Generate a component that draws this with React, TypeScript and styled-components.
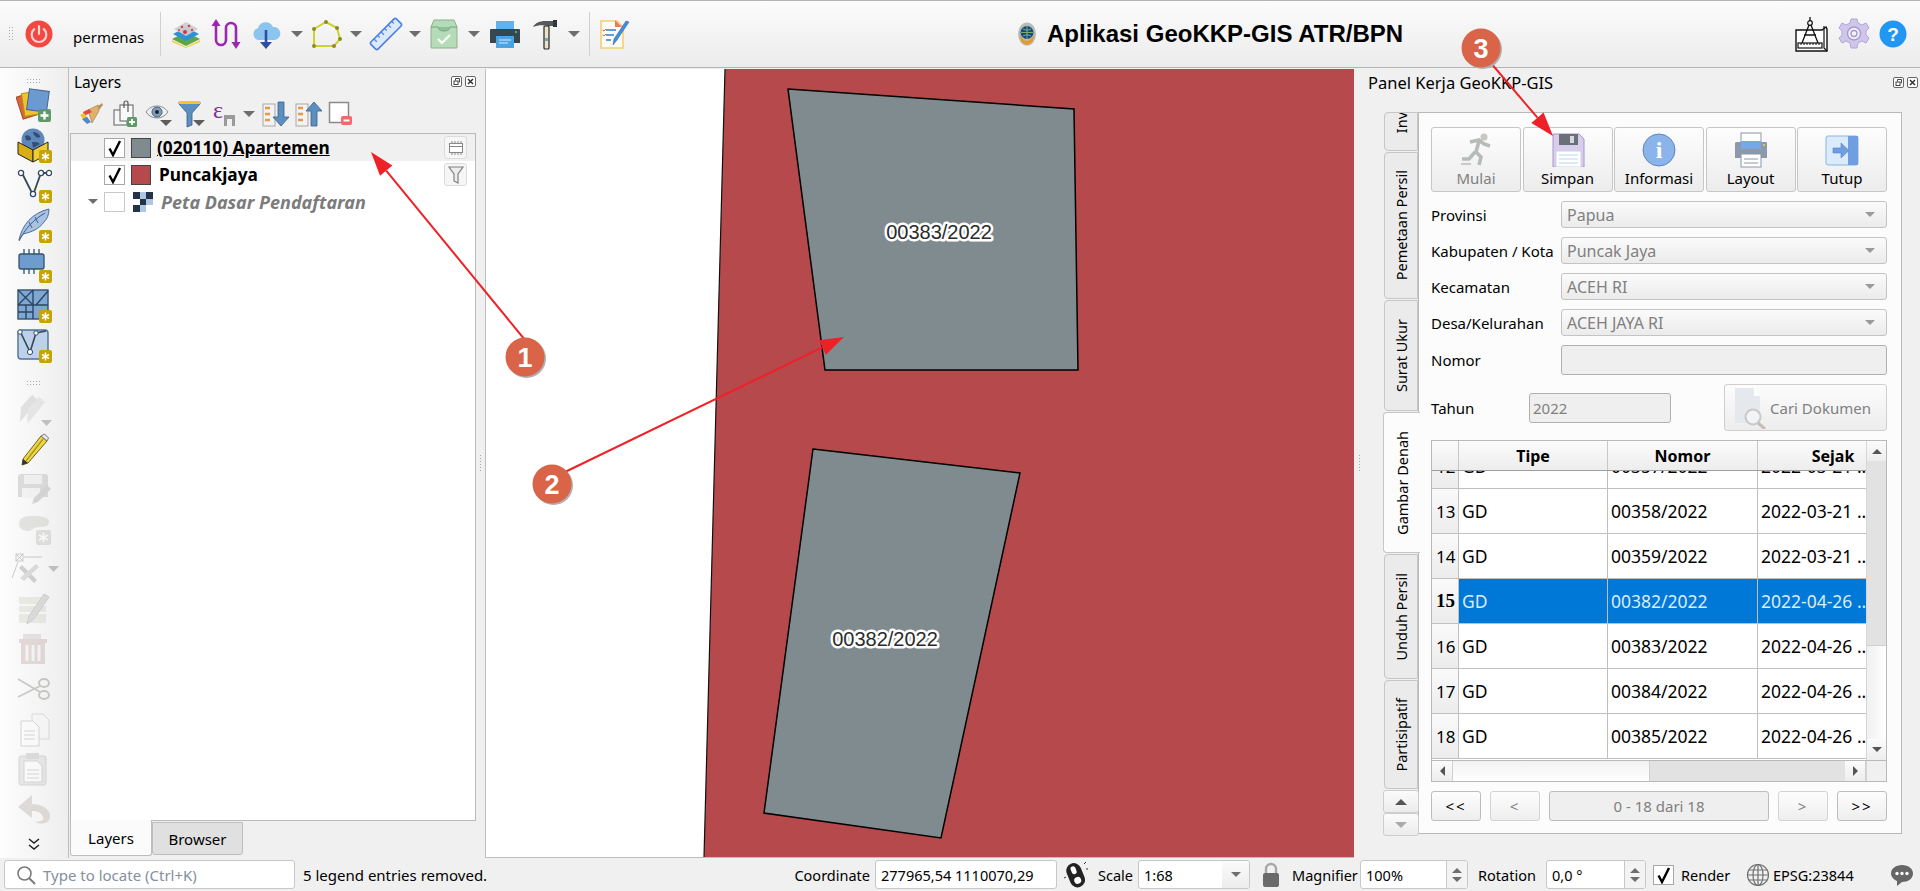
import React from "react";
import styled, { createGlobalStyle } from "styled-components";

const Global = createGlobalStyle`
  html, body { margin: 0; padding: 0; overflow: hidden; background: #f0f0f0; }
  #root { width: 1920px; height: 891px; }
  * { box-sizing: border-box; }
`;

const Page = styled.div`
  position: relative;
  width: 1920px;
  height: 891px;
  display: flex;
  flex-direction: column;
  background: #f0f0f0;
  color: #000;
  font-family: "Noto Sans", "Open Sans", sans-serif;
  font-size: 15px;
  overflow: hidden;
`;

/* ---------- generic drawing helpers ---------- */
const IconSvg = styled.svg`
  display: block;
  flex: none;
`;
const Ico: React.FC<{ w?: number; h?: number; children: React.ReactNode }> = ({ w = 32, h = 32, children }) => (
  <IconSvg width={w} height={h} viewBox={`0 0 ${w} ${h}`}>
    {children}
  </IconSvg>
);
const Badge = ({ x, y, off }: { x: number; y: number; off?: boolean }) => (
  <g transform={`translate(${x} ${y})`}>
    <rect width="13" height="13" rx="2" fill={off ? "#c9c9c2" : "#c9a300"} />
    <path d="M6.5 2.5v8M3 4.5l7 4M10 4.5l-7 4" stroke="#fff" strokeWidth="1.5" />
  </g>
);
const Caret = styled.span<{ $dir?: "up" | "down" | "left" | "right"; $size?: number; $color?: string }>`
  display: block;
  flex: none;
  width: 0;
  height: 0;
  ${({ $dir = "down", $size = 5, $color = "#6e6e6e" }) => {
    const s = `${$size}px solid transparent`;
    const c = `${$size}px solid ${$color}`;
    if ($dir === "down") return `border-left:${s};border-right:${s};border-top:${c};`;
    if ($dir === "up") return `border-left:${s};border-right:${s};border-bottom:${c};`;
    if ($dir === "left") return `border-top:${s};border-bottom:${s};border-right:${c};`;
    return `border-top:${s};border-bottom:${s};border-left:${c};`;
  }}
`;
const Dots = styled.div<{ $w: number; $h: number }>`
  flex: none;
  width: ${(p) => p.$w}px;
  height: ${(p) => p.$h}px;
  background-image: radial-gradient(circle, #a8a8a8 0.7px, transparent 0.8px);
  background-size: 3px 3px;
`;

/* ---------- top toolbar ---------- */
const TopBar = styled.header`
  flex: none;
  height: 68px;
  display: flex;
  align-items: center;
  padding-left: 8px;
  background: linear-gradient(#fbfbfb, #ececec);
  border-top: 1px solid #b4b4b4;
  border-bottom: 1px solid #b4b4b4;
`;
const ToolSlot = styled.div<{ $w: number }>`
  flex: none;
  width: ${(p) => p.$w}px;
  height: 40px;
  display: flex;
  align-items: center;
  justify-content: center;
`;
const UserName = styled.span`
  flex: none;
  width: 96px;
  padding-left: 9px;
  font-size: 15px;
  margin-top: 5px;
`;
const ToolSep = styled.div<{ $ml: number }>`
  flex: none;
  width: 1px;
  height: 44px;
  margin-left: ${(p) => p.$ml}px;
  background: #d0d0d0;
`;
const AppTitle = styled.div`
  flex: none;
  margin-left: 381px;
  width: 400px;
  display: flex;
  align-items: center;
  gap: 11px;
  font-family: "Liberation Sans", Arial, sans-serif;
  font-weight: 700;
  font-size: 24px;
  white-space: nowrap;
`;
const TopRight = styled.div`
  margin-left: auto;
  display: flex;
  align-items: center;
  gap: 9px;
  padding-right: 13px;
`;

/* ---------- main ---------- */
const Main = styled.main`
  flex: 1;
  min-height: 0;
  display: flex;
`;
const SideBar = styled.aside`
  flex: none;
  width: 69px;
  border-right: 1px solid #bdbdbd;
  display: flex;
  flex-direction: column;
  align-items: center;
  padding-top: 10px;
  background: linear-gradient(90deg, #fdfdfd, #eeeeee);
`;
const SideSlot = styled.div<{ $h?: number; $fade?: boolean }>`
  flex: none;
  width: 100%;
  height: ${(p) => p.$h ?? 40}px;
  display: flex;
  align-items: center;
  justify-content: center;
  opacity: ${(p) => (p.$fade ? 0.36 : 1)};
`;
const SideHandle = styled.div`
  flex: none;
  width: 100%;
  height: 25px;
  padding-bottom: 4px;
  display: flex;
  align-items: flex-end;
  justify-content: center;
`;
const Splitter = styled.div<{ $w: number }>`
  flex: none;
  width: ${(p) => p.$w}px;
  display: flex;
  align-items: center;
  justify-content: center;
`;
const Dock = styled.section`
  flex: none;
  width: 407px;
  padding-left: 1px;
  display: flex;
  flex-direction: column;
`;
const DockTitle = styled.div`
  flex: none;
  height: 26px;
  display: flex;
  align-items: center;
  padding: 1px 0 0 4px;
  font-size: 15.5px;
`;
const FloatButtons = styled.div`
  margin-left: auto;
  display: flex;
  gap: 3px;
`;
const DockTools = styled.div`
  flex: none;
  height: 39px;
  display: flex;
  align-items: center;
  padding-left: 8px;
`;
const DockTool = styled.div<{ $w: number }>`
  flex: none;
  width: ${(p) => p.$w}px;
  display: flex;
  justify-content: center;
  align-items: center;
`;
const Tree = styled.div`
  flex: 1;
  background: #fff;
  border: 1px solid #b9b9b9;
  min-height: 0;
`;
const TreeRow = styled.div<{ $active?: boolean }>`
  height: 27px;
  display: flex;
  align-items: center;
  padding-left: 11px;
  background: ${(p) => (p.$active ? "#f0f0f0" : "transparent")};
`;
const Expander = styled.div`
  flex: none;
  width: 22px;
  display: flex;
  justify-content: center;
`;
const CheckBox = styled.div<{ $dim?: boolean }>`
  flex: none;
  width: 21px;
  height: 20px;
  border: 1px solid ${(p) => (p.$dim ? "#c8c8c8" : "#a8a8a8")};
  background: #fff;
  display: flex;
  align-items: center;
  justify-content: center;
`;
const Swatch = styled.div<{ $c: string }>`
  flex: none;
  width: 20px;
  height: 20px;
  margin-left: 6px;
  background: ${(p) => p.$c};
  border: 1px solid #444;
`;
const RasterSlot = styled.div`
  flex: none;
  width: 20px;
  height: 20px;
  margin-left: 8px;
`;
const LayerName = styled.span<{ $u?: boolean; $ghost?: boolean; $ml: number }>`
  margin-left: ${(p) => p.$ml}px;
  font-weight: 700;
  font-size: ${(p) => (p.$ghost ? 18 : 17.3)}px;
  white-space: nowrap;
  text-decoration: ${(p) => (p.$u ? "underline" : "none")};
  font-style: ${(p) => (p.$ghost ? "italic" : "normal")};
  color: ${(p) => (p.$ghost ? "#7b7b7b" : "#000")};
`;
const Indicator = styled.div`
  flex: none;
  width: 23px;
  height: 23px;
  margin: 0 8px 0 auto;
  border: 1px solid #dcdcdc;
  border-radius: 3px;
  background: #f6f6f6;
  display: flex;
  align-items: center;
  justify-content: center;
`;
const DockTabs = styled.div`
  flex: none;
  height: 37px;
  display: flex;
  align-items: flex-start;
`;
const DockTab = styled.div<{ $active?: boolean }>`
  flex: none;
  width: ${(p) => (p.$active ? 82 : 91)}px;
  height: ${(p) => (p.$active ? 36 : 33)}px;
  margin-top: ${(p) => (p.$active ? -1 : 1)}px;
  background: ${(p) => (p.$active ? "#fbfbfb" : "#e0e0e0")};
  border: 1px solid #bdbdbd;
  border-top: ${(p) => (p.$active ? "0" : "1px solid #bdbdbd")};
  border-radius: 0 0 3px 3px;
  display: flex;
  align-items: center;
  justify-content: center;
  font-size: 15px;
`;
const MapFrame = styled.div`
  flex: none;
  width: 869px;
  height: 789px;
  margin-top: 1px;
  border-left: 1px solid #bdbdbd;
  border-bottom: 1px solid #bdbdbd;
  background: #fff;
`;
const MapSvg = styled.svg`
  display: block;
`;
const MapLabel = styled.text`
  font-family: "Liberation Sans", Arial, sans-serif;
  font-size: 20px;
  fill: #2b2b2b;
  stroke: #fff;
  stroke-width: 5px;
  paint-order: stroke;
  stroke-linejoin: round;
  text-anchor: middle;
  dominant-baseline: central;
`;

/* ---------- work panel ---------- */
const Panel = styled.section`
  flex: 1;
  min-width: 0;
  display: flex;
  flex-direction: column;
`;
const PanelTitle = styled.div`
  flex: none;
  height: 26px;
  margin-top: 1px;
  display: flex;
  align-items: center;
  padding: 0 2px 0 4px;
  font-size: 16.5px;
`;
const PanelBody = styled.div`
  flex: none;
  margin: 17px 0 0 19px;
  display: flex;
`;
const TabColumn = styled.div`
  flex: none;
  width: 35px;
  display: flex;
  flex-direction: column;
  align-items: flex-end;
  position: relative;
  z-index: 1;
`;
const SideTab = styled.div<{ $h: number; $active?: boolean; $end?: boolean }>`
  flex: none;
  height: ${(p) => p.$h}px;
  width: ${(p) => (p.$active ? 37 : 34)}px;
  margin-right: ${(p) => (p.$active ? -2 : 0)}px;
  margin-bottom: 1px;
  overflow: hidden;
  border: 1px solid #c6c6c6;
  border-right: ${(p) => (p.$active ? "0" : "1px solid #c6c6c6")};
  border-radius: 4px 0 0 4px;
  background: ${(p) => (p.$active ? "#fcfcfc" : "#ebebeb")};
  display: flex;
  align-items: center;
  justify-content: ${(p) => (p.$end ? "flex-end" : "center")};
  flex-direction: column;
  padding-bottom: ${(p) => (p.$end ? 17 : 0)}px;
`;
const SideTabText = styled.span`
  writing-mode: vertical-rl;
  transform: rotate(180deg);
  white-space: nowrap;
  font-size: 14.5px;
  line-height: 1;
`;
const TabStep = styled.div`
  flex: none;
  width: 36px;
  height: 23px;
  margin-right: -1px;
  border: 1px solid #cdcdcd;
  border-radius: 3px;
  background: linear-gradient(#fbfbfb, #ececec);
  display: flex;
  align-items: center;
  justify-content: center;
`;
const Pane = styled.div`
  flex: none;
  width: 484px;
  height: 722px;
  padding: 14px 14px 0 12px;
  background: #fcfcfc;
  border: 1px solid #b9b9b9;
  display: flex;
  flex-direction: column;
`;
const ActionRow = styled.div`
  flex: none;
  display: grid;
  grid-template-columns: 90px 90px 90px 90px 90px;
  column-gap: 1.5px;
  height: 65px;
`;
const ActionBtn = styled.div<{ $off?: boolean }>`
  border: 1px solid #c6c6c6;
  border-radius: 3px;
  background: linear-gradient(#fdfdfd, #ececec);
  display: flex;
  flex-direction: column;
  align-items: center;
  padding-top: 3px;
  color: ${(p) => (p.$off ? "#808080" : "#000")};
  font-size: 15px;
  line-height: 20px;
`;
const ActionIcon = styled.div`
  height: 37px;
  display: flex;
  align-items: center;
  justify-content: center;
`;
const FormGrid = styled.div`
  flex: none;
  margin-top: 9px;
  display: grid;
  grid-template-columns: 130px 326px;
  row-gap: 9px;
  align-items: center;
`;
const FieldLabel = styled.span`
  font-size: 15px;
  white-space: nowrap;
`;
const Combo = styled.div`
  height: 27px;
  display: flex;
  align-items: center;
  justify-content: space-between;
  padding: 0 11px 0 5px;
  border: 1px solid #c4c4c4;
  border-radius: 3px;
  background: linear-gradient(#fbfbfb, #ebebeb);
  color: #808080;
  font-size: 16px;
`;
const EmptyField = styled.div`
  height: 30px;
  border: 1px solid #b0b0b0;
  border-radius: 3px;
  background: #efefef;
`;
const YearRow = styled.div`
  flex: none;
  margin-top: 9px;
  height: 47px;
  display: flex;
  align-items: center;
`;
const YearLabel = styled(FieldLabel)`
  flex: none;
  width: 98px;
`;
const YearField = styled.div`
  flex: none;
  width: 142px;
  height: 30px;
  padding: 0 3px;
  display: flex;
  align-items: center;
  border: 1px solid #b0b0b0;
  border-radius: 3px;
  background: #efefef;
  color: #808080;
`;
const FindBtn = styled.div`
  flex: none;
  margin-left: auto;
  width: 163px;
  height: 47px;
  display: flex;
  align-items: center;
  padding-left: 7px;
  border: 1px solid #cfcfcf;
  border-radius: 3px;
  background: linear-gradient(#fcfcfc, #ededed);
  color: #808080;
  font-size: 15px;
  white-space: nowrap;
`;
const TableFrame = styled.div`
  flex: none;
  margin-top: 9px;
  height: 342px;
  display: grid;
  grid-template-columns: 434px 20px;
  grid-template-rows: 319px 21px;
  border: 1px solid #b9b9b9;
  background: #fff;
`;
const TableView = styled.div`
  min-width: 0;
  overflow: hidden;
  display: flex;
  flex-direction: column;
`;
const cols = "27px 149px 150px 151px";
const HeadRow = styled.div`
  flex: none;
  position: relative;
  z-index: 1;
  height: 30px;
  display: grid;
  grid-template-columns: ${cols};
  background: linear-gradient(#fbfbfb, #ededed);
  border-bottom: 1px solid #9f9f9f;
`;
const HeadCell = styled.div`
  display: flex;
  align-items: center;
  justify-content: center;
  border-right: 1px solid #c8c8c8;
  font-weight: 700;
  font-size: 16px;
`;
const BodyClip = styled.div`
  flex: 1;
  min-height: 0;
  overflow: hidden;
`;
const RowsScroll = styled.div`
  margin-top: -27px;
`;
const DataRow = styled.div`
  height: 45px;
  display: grid;
  grid-template-columns: ${cols};
`;
const RowHead = styled.div<{ $sel?: boolean }>`
  display: flex;
  align-items: center;
  padding-left: 4px;
  background: linear-gradient(#fafafa, #ececec);
  border-right: 1px solid #c0c0c0;
  border-bottom: 1px solid #c0c0c0;
  font-size: ${(p) => (p.$sel ? 19 : 17)}px;
  font-family: ${(p) => (p.$sel ? '"Liberation Serif", serif' : "inherit")};
  font-weight: ${(p) => (p.$sel ? 700 : 400)};
`;
const Cell = styled.div<{ $sel?: boolean }>`
  display: flex;
  align-items: center;
  padding-left: 3px;
  white-space: nowrap;
  overflow: hidden;
  font-size: 17.5px;
  background: ${(p) => (p.$sel ? "#0078d7" : "#fff")};
  color: ${(p) => (p.$sel ? "#dcecf9" : "#000")};
  border-right: 1px solid #c0c0c0;
  border-bottom: 1px solid #c0c0c0;
`;
const VScroll = styled.div`
  display: flex;
  flex-direction: column;
  background: linear-gradient(90deg, #f0f0f0, #ffffff);
  border-left: 1px solid #d6d6d6;
`;
const VStep = styled.div<{ $h: number }>`
  flex: none;
  height: ${(p) => p.$h}px;
  background: linear-gradient(#fbfbfb, #ededed);
  display: flex;
  align-items: center;
  justify-content: center;
`;
const VThumb = styled.div`
  flex: none;
  height: 185px;
  background: #e2e2e2;
  border-bottom: 1px solid #d0d0d0;
`;
const VTrack = styled.div`
  flex: 1;
`;
const HScroll = styled.div`
  display: grid;
  grid-template-columns: 21px 196px 196px 21px;
  background: linear-gradient(#f2f2f2, #ffffff);
  border-top: 1px solid #b9b9b9;
`;
const HStep = styled.div`
  display: flex;
  align-items: center;
  justify-content: center;
  background: linear-gradient(#fbfbfb, #ededed);
  border-right: 1px solid #d0d0d0;
`;
const HThumb = styled.div`
  background: #e2e2e2;
  border-left: 1px solid #cfcfcf;
`;
const HTrack = styled.div``;
const Corner = styled.div`
  background: #f0f0f0;
  border-top: 1px solid #b9b9b9;
  border-left: 1px solid #d6d6d6;
`;
const Pager = styled.div`
  flex: none;
  margin-top: 9px;
  height: 30px;
  display: grid;
  grid-template-columns: 50px 50px 220px 50px 50px;
  column-gap: 9px;
`;
const PageBtn = styled.div<{ $off?: boolean; $flat?: boolean }>`
  display: flex;
  align-items: center;
  justify-content: center;
  border: 1px solid ${(p) => (p.$off && !p.$flat ? "#d4d4d4" : "#bdbdbd")};
  border-radius: 3px;
  background: ${(p) => (p.$flat ? "#efefef" : "linear-gradient(#fdfdfd, #eeeeee)")};
  color: ${(p) => (p.$off ? "#808080" : "#000")};
  font-size: 15px;
  letter-spacing: ${(p) => (p.$flat ? 0 : 2)}px;
`;

/* ---------- status bar ---------- */
const StatusBar = styled.footer`
  flex: none;
  height: 33px;
  display: flex;
  align-items: center;
  padding-left: 4px;
  font-size: 14.5px;
  white-space: nowrap;
`;
const Locator = styled.div`
  flex: none;
  width: 291px;
  height: 29px;
  display: flex;
  align-items: center;
  gap: 7px;
  padding-left: 11px;
  background: #fff;
  border: 1px solid #c8c8c8;
  border-radius: 3px;
  color: #84909c;
  font-size: 15px;
`;
const StatusMsg = styled.span`
  flex: none;
  width: 499px;
  padding-left: 8px;
  font-size: 15px;
`;
const StatusLabel = styled.span<{ $w: number; $right?: boolean; $pad?: number }>`
  flex: none;
  width: ${(p) => p.$w}px;
  text-align: ${(p) => (p.$right ? "right" : "left")};
  ${(p) => (p.$right ? `padding-right:${p.$pad ?? 5}px;` : `padding-left:${p.$pad ?? 0}px;`)}
`;
const StatusField = styled.div<{ $w: number }>`
  flex: none;
  width: ${(p) => p.$w}px;
  height: 29px;
  display: flex;
  align-items: center;
  justify-content: space-between;
  background: #fff;
  border: 1px solid #c8c8c8;
  border-radius: 3px;
  padding-left: 5px;
  overflow: hidden;
`;
const SpinCol = styled.div`
  flex: none;
  align-self: stretch;
  width: 21px;
  display: flex;
  flex-direction: column;
  align-items: center;
  justify-content: center;
  gap: 4px;
  background: #f3f3f3;
  border-left: 1px solid #c8c8c8;
`;
const ComboDrop = styled(SpinCol)`
  width: 27px;
  background: linear-gradient(#fbfbfb, #ececec);
  border-left: 0;
`;
const StatusSlot = styled.div<{ $w: number; $ml?: number }>`
  flex: none;
  width: ${(p) => p.$w}px;
  margin-left: ${(p) => p.$ml ?? 0}px;
  display: flex;
  justify-content: center;
  align-items: center;
`;
const StatusCheck = styled(CheckBox)`
  margin-left: 7px;
`;

/* ---------- annotation overlay ---------- */
const Overlay = styled.svg`
  position: absolute;
  left: 0;
  top: 0;
  pointer-events: none;
  z-index: 5;
`;
const CalloutNum = styled.text`
  font-family: "Liberation Sans", Arial, sans-serif;
  font-weight: 700;
  font-size: 27px;
  fill: #fff;
  text-anchor: middle;
  dominant-baseline: central;
`;

/* ---------- toolbar icons ---------- */
const PowerIcon = () => (
  <Ico w={30} h={30}>
    <circle cx="15" cy="15" r="13.5" fill="#f3473f" />
    <path d="M10.2 10.2a7.3 7.3 0 1 0 9.6 0" fill="none" stroke="#fcd6d3" strokeWidth="2.2" strokeLinecap="round" />
    <path d="M15 7v8" stroke="#fcd6d3" strokeWidth="2.2" strokeLinecap="round" />
  </Ico>
);
const MapLayersIcon = () => (
  <Ico>
    <path d="M2 21l14-7 14 7-14 7z" fill="#5aa64a" />
    <path d="M2 22l14 7 14-7v2l-14 6-14-6z" fill="#f0cf3c" />
    <path d="M3 16l13-7 13 7-13 7z" fill="#2f8fd8" />
    <path d="M4 11l12-7 12 7-12 7z" fill="#c9ced3" opacity=".95" />
    <circle cx="12" cy="9" r="1.3" fill="#e0453a" />
    <circle cx="19" cy="8" r="1.3" fill="#e0453a" />
    <circle cx="15" cy="14" r="2" fill="#d5343a" />
    <circle cx="22" cy="12" r="1.2" fill="#e0453a" />
    <circle cx="9" cy="12" r="1.1" fill="#e0453a" />
  </Ico>
);
const WaveIcon = () => (
  <Ico w={30} h={32}>
    <path d="M5 7v15a5 5 0 0 0 10 0V10a5 5 0 0 1 10 0v16" fill="none" stroke="#9c27b0" strokeWidth="2.6" />
    <path d="M5 1l-4.500 7h9z" fill="#9c27b0" />
    <path d="M25 31l-4.500-7h9z" fill="#9c27b0" />
  </Ico>
);
const CloudIcon = () => (
  <Ico>
    <path d="M8 22a6 6 0 0 1-1-11.8A8 8 0 0 1 22 9a6.5 6.5 0 0 1 1.5 13z" fill="#8cc4f0" />
    <path d="M15 12v14" stroke="#2c4fa6" strokeWidth="2.6" />
    <path d="M15 31l-6-7h12z" fill="#2c4fa6" />
  </Ico>
);
const PolygonIcon = () => (
  <Ico>
    <path d="M4 28V11l12-7 11 6 3 11-6 7z" fill="none" stroke="#cdd32e" strokeWidth="2" />
    {[[4, 28], [4, 11], [16, 4], [27, 10], [30, 21], [24, 28]].map(([x, y]) => (
      <circle key={`${x}-${y}`} cx={x} cy={y} r="2" fill="#8f8a26" />
    ))}
  </Ico>
);
const RulerIcon = () => (
  <Ico w={34} h={34}>
    <g transform="rotate(-45 17 17)">
      <rect x="-1" y="12" width="36" height="10" rx="2" fill="#dce8fc" stroke="#4b7ee8" strokeWidth="1.6" />
      <path d="M5 12v4M10 12v3M15 12v4M20 12v3M25 12v4M30 12v3" stroke="#4b7ee8" strokeWidth="1.2" />
    </g>
  </Ico>
);
const TrayIcon = () => (
  <Ico>
    <path d="M2 9l3-7h20l3 7v21H2z" fill="#b3dcb7" stroke="#8fae92" />
    <path d="M2 9h7c1 3 2 4 6 4s5-1 6-4h7" fill="#8fc096" stroke="#7da282" />
    <path d="M9 21l4 4 8-8" fill="none" stroke="#fff" strokeWidth="2.2" />
  </Ico>
);
const PrinterIcon = () => (
  <Ico>
    <rect x="8" y="3" width="18" height="9" fill="#5db4ee" />
    <path d="M3 11h28a1 1 0 0 1 1 1v13H2V12a1 1 0 0 1 1-1z" fill="#37474f" />
    <rect x="8" y="18" width="18" height="12" fill="#4aa3e4" />
    <path d="M11 22h12M11 25h9" stroke="#d7ecfb" strokeWidth="1.2" />
    <circle cx="28" cy="14" r="1" fill="#5fd07a" />
  </Ico>
);
const HammerIcon = () => (
  <Ico>
    <path d="M3 9c2-4 7-6 12-6h11v5H18c-5-1-10-1-15 1z" fill="#555a5f" />
    <rect x="23" y="2" width="4" height="7" fill="#33373b" />
    <rect x="14" y="8" width="5" height="23" rx="1" fill="#ece3cc" stroke="#222" strokeWidth="1.200" />
    <rect x="15" y="20" width="3" height="3" fill="#7aa7c7" />
  </Ico>
);
const NoteIcon = () => (
  <Ico>
    <path d="M3 3h16l6 6v21H3z" fill="#fffdf2" stroke="#f3cf76" strokeWidth="1.6" />
    <path d="M17 2l7 7h-7z" fill="#ef7a52" />
    <path d="M8 12h10M8 17h8M8 22h5" stroke="#5aa0de" strokeWidth="1.8" />
    <path d="M4.5 12l1.5 1 2-2M4.5 17l1.5 1 2-2" stroke="#e25a4a" strokeWidth="1" fill="none" />
    <path d="M31 4l-12 18-4 5 1-6L28 3z" fill="#3f8fdc" stroke="#2f6db0" strokeWidth=".6" />
  </Ico>
);
const EmblemIcon = () => (
  <Ico w={18} h={24}>
    <ellipse cx="9" cy="12" rx="9" ry="11.5" fill="#b8bdb2" />
    <path d="M2 13c0 6 3 9 7 10 4-1 7-4 7-10-2 3-4 6-7 6s-5-3-7-6z" fill="#e59a2b" />
    <circle cx="9" cy="10.5" r="6.5" fill="#164a86" />
    <path d="M3 10.5h12M9 4v13M5 7c3 1.5 5 1.5 8 0M5 14c3-1.5 5-1.5 8 0" stroke="#88b36c" strokeWidth=".9" fill="none" />
  </Ico>
);
const CompassIcon = () => (
  <Ico w={34} h={36}>
    <path d="M1 14h26l4-3 1 2v22H1z" fill="#fff" stroke="#111" strokeWidth="1.4" />
    <path d="M29 10v22l3 3" fill="none" stroke="#111" strokeWidth="1.2" />
    <circle cx="15" cy="7" r="2.3" fill="none" stroke="#111" strokeWidth="1.2" />
    <path d="M15 1v4M14 9L7 27M16 9l7 18M9 19h12" stroke="#111" strokeWidth="1.3" />
    <rect x="3" y="27" width="24" height="5" fill="#fff" stroke="#111" strokeWidth="1.2" />
    <path d="M6 27v2M9 27v2M12 27v2M15 27v2M18 27v2M21 27v2M24 27v2" stroke="#111" />
  </Ico>
);
const GearIcon = () => (
  <Ico>
    <g fill="#cfc6ea" stroke="#b1a6d8" strokeWidth="1">
      <path d="M13 1h6l1 4 4 2 4-2 3 5-3 3v4l3 3-3 5-4-2-4 2-1 5h-6l-1-5-4-2-4 2-3-5 3-3v-4L1 10l3-5 4 2 4-2z" />
    </g>
    <circle cx="16" cy="15.5" r="6.5" fill="#f4f2fa" stroke="#a59ad0" strokeWidth="1.4" />
    <circle cx="16" cy="15.5" r="3" fill="none" stroke="#a59ad0" strokeWidth="1.4" />
  </Ico>
);
const HelpText = styled.text`
  font-family: "Liberation Sans", Arial, sans-serif;
  font-weight: 700;
  font-size: 19px;
  fill: #fff;
  text-anchor: middle;
`;
const HelpIcon = () => (
  <Ico w={28} h={28}>
    <circle cx="14" cy="14" r="13.5" fill="#2196f3" />
    <HelpText x="14" y="21">?</HelpText>
  </Ico>
);

/* side toolbar */
const AddLayersIcon = () => (
  <Ico w={36} h={36}>
    <rect x="3" y="7" width="19" height="23" transform="rotate(-18 12 18)" fill="#d8663a" stroke="#a84a26" />
    <rect x="7" y="5" width="19" height="23" transform="rotate(-9 16 16)" fill="#f0c22c" stroke="#b8921a" />
    <rect x="12" y="3" width="20" height="21" transform="rotate(8 22 13)" fill="#6b9ad0" stroke="#41648e" />
    <rect x="22" y="22" width="13" height="13" rx="2" fill="#5d9a68" />
    <path d="M28.5 24.5v8M24.5 28.5h8" stroke="#fff" strokeWidth="2.4" />
  </Ico>
);
const WmsIcon = () => (
  <Ico w={36} h={36}>
    <circle cx="17" cy="13" r="11.5" fill="#5f88b8" />
    <path d="M9 9c3-2 5 0 6 2s-3 3-5 2zM17 5c3 0 6 2 7 4s-3 2-4 1-3-3-3-5zM16 15c3 0 6 0 8 2l-7 4z" fill="#2e4f78" />
    <path d="M2 15l15 8v12L2 27z" fill="#d9ae12" stroke="#222" />
    <path d="M32 15l-15 8v12l15-8z" fill="#efcb3a" stroke="#222" />
    <Badge x={23} y={23} />
  </Ico>
);
const VertexIcon = () => (
  <Ico w={36} h={36}>
    <path d="M6 6l11 22 8-22h9" fill="none" stroke="#34495e" strokeWidth="1.8" />
    <circle cx="5" cy="6" r="2.6" fill="#fff" stroke="#34495e" strokeWidth="1.3" />
    <circle cx="17" cy="27" r="2.6" fill="#fff" stroke="#34495e" strokeWidth="1.3" />
    <circle cx="25" cy="6" r="2.6" fill="#fff" stroke="#34495e" strokeWidth="1.3" />
    <circle cx="33" cy="6" r="2.6" fill="#fff" stroke="#34495e" strokeWidth="1.3" />
    <Badge x={23} y={23} />
  </Ico>
);
const FeatherIcon = () => (
  <Ico w={36} h={36}>
    <path d="M3 33C6 18 16 6 33 2c0 6-2 10-5 13-5 7-12 10-21 12z" fill="#a8c1e4" stroke="#4f6f98" strokeWidth="1" />
    <path d="M3 34C9 22 17 13 29 6M13 15l3 6M19 10l3 6" stroke="#3f5f88" strokeWidth="1" fill="none" />
    <Badge x={23} y={23} />
  </Ico>
);
const ChipIcon = () => (
  <Ico w={36} h={36}>
    <rect x="3" y="7" width="25" height="15" rx="2" fill="#6e9ccf" stroke="#33506e" strokeWidth="1.3" />
    <path d="M8 2v5M13 2v5M18 2v5M23 2v5M8 22v5M13 22v5M18 22v5" stroke="#33506e" strokeWidth="1.3" />
    <Badge x={23} y={23} />
  </Ico>
);
const MeshIcon = () => (
  <Ico w={36} h={36}>
    <rect x="2" y="3" width="30" height="29" fill="#7ea7d4" stroke="#34506f" strokeWidth="1.4" />
    <path d="M2 18h30M17 3v29M2 3l15 15M17 3L2 18M20 18L32 4M2 25h15M10 18v14" stroke="#2d4560" strokeWidth="1.4" fill="none" />
    <Badge x={23} y={23} />
  </Ico>
);
const VirtualIcon = () => (
  <Ico w={36} h={36}>
    <rect x="2" y="3" width="30" height="29" rx="3" fill="#bdd1e8" stroke="#4f7198" strokeWidth="1.4" />
    <path d="M4 4l10 21 6-19 10-2" fill="none" stroke="#34495e" strokeWidth="1.6" />
    <circle cx="4" cy="5" r="2.2" fill="#fff" stroke="#34495e" />
    <circle cx="14" cy="25" r="2.6" fill="#fff" stroke="#34495e" />
    <circle cx="20" cy="6" r="2.2" fill="#fff" stroke="#34495e" />
    <Badge x={23} y={23} />
  </Ico>
);
const EditsIcon = () => (
  <Ico w={36} h={36}>
    <path d="M4 30l1-15 11-12 6 5-12 15z" fill="#b9b9b9" />
    <path d="M11 32l1-15 11-12 6 5-12 15z" fill="#c9c9c9" />
    <path d="M25 28h11l-5.500 6z" fill="#666" />
  </Ico>
);
const PencilIcon = () => (
  <Ico w={36} h={36}>
    <path d="M7 27L25 4l6 5-19 22-6 2z" fill="#f0d83c" stroke="#6a6030" strokeWidth="1" />
    <path d="M10 29L27 7" stroke="#a8952a" strokeWidth="1.4" />
    <path d="M25 4l6 5 1.500-3-4-4z" fill="#e8e8e8" stroke="#777" />
    <path d="M6 33l1-6 5 4z" fill="#333" />
  </Ico>
);
const SaveEditsIcon = () => (
  <Ico w={36} h={36}>
    <path d="M2 5a3 3 0 0 1 3-3h24a3 3 0 0 1 3 3v20H2z" fill="#a9a9a9" />
    <rect x="8" y="3" width="18" height="9" fill="#e2e2e2" />
    <rect x="6" y="16" width="18" height="10" fill="#e8e8e8" />
    <path d="M16 32l2-6 13-13 4 4-13 13z" fill="#9a9a9a" />
  </Ico>
);
const DigitizeIcon = () => (
  <Ico w={36} h={36}>
    <path d="M3 12c0-7 6-8 14-8s16 1 16 6-7 5-11 5-6 4-10 4-9-2-9-7z" fill="#bdbdb6" />
    <rect x="20" y="18" width="15" height="15" rx="2" fill="#b5b5ae" />
    <path d="M27.500 20.500v10M23 23l9 5M32 23l-9 5" stroke="#fff" strokeWidth="1.6" />
  </Ico>
);
const ToolsIcon = () => (
  <Ico w={50} h={36}>
    <rect x="7" y="2" width="7" height="7" fill="none" stroke="#777" />
    <path d="M7 2l7 7M14 2L7 9M15 5h18M9 10L3 26" stroke="#777" />
    <path d="M10 16l3-3 15 15-3 3z" fill="#888" />
    <path d="M27 12l3 3-15 14-4-3z" fill="#aaa" />
    <path d="M39 14h11l-5.500 6z" fill="#666" />
  </Ico>
);
const TableEditIcon = () => (
  <Ico w={36} h={36}>
    <rect x="3" y="5" width="27" height="26" fill="#cfcfc0" />
    <path d="M3 13h27M3 21h27" stroke="#f5f5f5" strokeWidth="2" />
    <path d="M11 32l2-8 15-22 5 3-15 22z" fill="#a9a9a9" stroke="#888" />
  </Ico>
);
const TrashIcon = () => (
  <Ico w={36} h={36}>
    <path d="M3 7h28v4h-2v21H5V11H3z" fill="#b08c8c" opacity=".8" />
    <rect x="7" y="2" width="18" height="5" fill="#bcbcbc" />
    <path d="M11 13v16M17 13v16M23 13v16" stroke="#eee" strokeWidth="3" />
  </Ico>
);
const CutIcon = () => (
  <Ico w={36} h={36}>
    <path d="M2 7l22 13M2 25l22-11" stroke="#777" strokeWidth="1.6" />
    <ellipse cx="28" cy="11" rx="5" ry="4" fill="none" stroke="#776" strokeWidth="2" />
    <ellipse cx="28" cy="23" rx="5" ry="4" fill="none" stroke="#776" strokeWidth="2" />
  </Ico>
);
const CopyIcon = () => (
  <Ico w={36} h={36}>
    <path d="M16 2h11l6 6v19H16z" fill="#f6f6f6" stroke="#aaa" />
    <path d="M5 9h12l6 6v19H5z" fill="#fff" stroke="#999" />
    <path d="M8 19h11M8 23h11M8 27h11" stroke="#999" />
  </Ico>
);
const PasteIcon = () => (
  <Ico w={36} h={36}>
    <rect x="3" y="4" width="27" height="29" rx="2" fill="#c9c9c9" stroke="#999" />
    <rect x="10" y="1" width="13" height="6" fill="#aaa" />
    <path d="M8 9h13l5 5v16H8z" fill="#fff" stroke="#999" />
    <path d="M11 18h12M11 22h12M11 26h12" stroke="#999" />
  </Ico>
);
const UndoIcon = () => (
  <Ico w={36} h={36}>
    <path d="M16 3L2 15l14 11v-7c6 0 10 2 11 6 2 3-3 5-8 5 6 3 15 2 15-6 0-7-8-12-18-12z" fill="#b3a8a0" />
  </Ico>
);

/* dock header */
const BrushIcon = () => (
  <Ico w={26} h={26}>
    <path d="M20 5l4-3 1 2-4 5z" fill="#b8935e" />
    <path d="M10 9l10-5 1 6-7 12z" fill="#deb26c" stroke="#a07a3c" strokeWidth=".6" />
    <path d="M5 11l6-3 3 3-8 4z" fill="#dd4c3e" />
    <path d="M2 14l4-2 4 5-4 2z" fill="#f0c22c" />
    <path d="M4 18l5-2 4 5-4 2z" fill="#4f86cf" />
  </Ico>
);
const ClipAddIcon = () => (
  <Ico w={26} h={28}>
    <rect x="2" y="10" width="13" height="15" fill="#f6f6f6" stroke="#777" strokeWidth="1.2" />
    <rect x="8" y="5" width="13" height="16" fill="#f9f9f9" stroke="#777" strokeWidth="1.2" />
    <path d="M12 8V3a2 2 0 0 1 4 0v9" fill="none" stroke="#555" strokeWidth="1.2" />
    <rect x="15" y="17" width="10" height="10" rx="1.500" fill="#5d9a68" />
    <path d="M20 19v6M17 22h6" stroke="#fff" strokeWidth="1.800" />
  </Ico>
);
const EyeIcon = () => (
  <Ico w={28} h={26}>
    <path d="M1 11c5-8 17-8 22 0-5 8-17 8-22 0z" fill="#eee" stroke="#8a8a8a" />
    <circle cx="12" cy="11" r="5" fill="#7f9fb8" stroke="#46617a" />
    <circle cx="12" cy="11" r="2" fill="#223" />
    <path d="M15 19h12l-6 6z" fill="#5d5d5d" />
  </Ico>
);
const FunnelIcon = () => (
  <Ico w={28} h={28}>
    <path d="M1 2h21v2l-8 9v12l-5 2V13L1 4z" fill="#5b8fc0" stroke="#3a5e85" strokeWidth=".8" />
    <rect x="1" y="1" width="21" height="3" fill="#f0c732" />
    <path d="M15 20h12l-6 6z" fill="#5d5d5d" />
  </Ico>
);
const EpsilonText = styled.text`
  font-family: "Liberation Serif", serif;
  font-size: 24px;
  fill: #7d2f8e;
`;
const EpsilonIcon = () => (
  <Ico w={26} h={28}>
    <EpsilonText x="1" y="18">ε</EpsilonText>
    <path d="M12 15h11v11h-3v-7h-5v7h-3z" fill="#9a9a9a" />
  </Ico>
);
const ExpandIcon = ({ up }: { up?: boolean }) => (
  <Ico w={28} h={26}>
    <rect x="1" y="3" width="12" height="22" fill="#f2f2f2" stroke="#a8a8a8" />
    <path d="M3 7h5M3 13h5M3 19h5" stroke="#e29a4a" strokeWidth="2.5" />
    {up ? (
      <path d="M19 1l8 9h-5v15h-6V10h-5z" fill="#5b8fc0" stroke="#3a5e85" strokeWidth=".8" />
    ) : (
      <path d="M16 1h6v15h5l-8 9-8-9h5z" fill="#5b8fc0" stroke="#3a5e85" strokeWidth=".8" />
    )}
  </Ico>
);
const RemoveLayerIcon = () => (
  <Ico w={26} h={26}>
    <rect x="1.500" y="1.500" width="19" height="20" fill="#fff" stroke="#8a8a8a" strokeWidth="1.500" />
    <rect x="13" y="15" width="11" height="9" rx="2" fill="#ef6a6a" />
    <path d="M15.500 19.500h6" stroke="#fff" strokeWidth="2" />
  </Ico>
);
const FloatIcon = () => (
  <Ico w={11} h={11}>
    <rect x=".5" y=".5" width="10" height="10" rx="1.500" fill="#fff" stroke="#666" />
    <rect x="3" y="5" width="4" height="3.500" fill="none" stroke="#444" />
    <path d="M4.500 4.500V2.500H8.500V6H7.500" fill="none" stroke="#444" />
  </Ico>
);
const CloseIcon = () => (
  <Ico w={11} h={11}>
    <rect x=".5" y=".5" width="10" height="10" rx="1.500" fill="#fff" stroke="#666" />
    <path d="M3 3l5 5M8 3l-5 5" stroke="#333" strokeWidth="1.500" />
  </Ico>
);
const Tick = () => (
  <Ico w={16} h={18}>
    <path d="M2.500 9.500L6 16 13 2" fill="none" stroke="#000" strokeWidth="2.400" />
  </Ico>
);
const ChipSmall = () => (
  <Ico w={18} h={16}>
    <rect x="2.500" y="3.500" width="13" height="9" fill="#fff" stroke="#888" />
    <path d="M2.500 6.500h13M5 1v2.500M8 1v2.500M11 1v2.500M14 1v2.500M5 12.500V15M8 12.500V15M11 12.500V15M14 12.500V15" stroke="#888" />
  </Ico>
);
const FilterSmall = () => (
  <Ico w={16} h={20}>
    <path d="M1 2h14l-5 7v9l-4-2V9z" fill="#ededed" stroke="#808080" strokeWidth="1.200" />
  </Ico>
);
const RasterIcon = () => (
  <Ico w={20} h={20}>
    <rect width="20" height="20" fill="#fff" />
    <rect x="0" y="0" width="7" height="7" fill="#233347" />
    <rect x="13" y="0" width="7" height="7" fill="#233347" />
    <rect x="7" y="0" width="6" height="7" fill="#adc6e4" />
    <rect x="7" y="7" width="6" height="6" fill="#233347" />
    <rect x="13" y="7" width="7" height="6" fill="#adc6e4" />
    <rect x="0" y="13" width="7" height="7" fill="#233347" />
    <rect x="7" y="13" width="6" height="7" fill="#adc6e4" />
  </Ico>
);

/* panel buttons */
const RunnerIcon = () => (
  <Ico w={34} h={34}>
    <circle cx="25" cy="4" r="3.500" fill="#c8c8c0" />
    <path d="M11 9l9-2 5 4 6 2M20 8l-3 11 5 5-2 8M16 19l-6 7H3" fill="none" stroke="#b6bdb8" strokeWidth="3.600" />
    <path d="M2 31h10" stroke="#c9c9c9" strokeWidth="2" />
  </Ico>
);
const FloppyIcon = () => (
  <Ico w={34} h={34}>
    <path d="M2 1h26l5 5v28H2z" fill="#d8cdea" stroke="#a996c8" />
    <rect x="8" y="1" width="19" height="11" fill="#6b6f78" />
    <rect x="19" y="3" width="4" height="7" fill="#d5d8de" />
    <rect x="5" y="18" width="25" height="16" fill="#fff" stroke="#c5d5ec" />
    <path d="M8 22h19M8 26h19M8 30h19" stroke="#bcd4f0" />
  </Ico>
);
const InfoText = styled.text`
  font-family: "Liberation Serif", serif;
  font-weight: 700;
  font-size: 24px;
  fill: #fff;
  text-anchor: middle;
`;
const InfoIcon = () => (
  <Ico w={34} h={34}>
    <circle cx="17" cy="17" r="16" fill="#8ab4ea" stroke="#5e86bb" />
    <InfoText x="17" y="25">i</InfoText>
  </Ico>
);
const PrintBlueIcon = () => (
  <Ico w={34} h={36}>
    <rect x="7" y="1" width="20" height="11" fill="#fff" stroke="#8a97a8" />
    <path d="M2 10h30a1 1 0 0 1 1 1v15H1V11z" fill="#8b99ab" />
    <rect x="7" y="9" width="20" height="8" fill="#77a7e6" />
    <rect x="7" y="22" width="20" height="13" fill="#fff" stroke="#8a97a8" />
    <path d="M10 27h14M10 31h14" stroke="#8a97a8" />
    <circle cx="30" cy="13" r="1" fill="#f5d45c" />
  </Ico>
);
const ExitIcon = () => (
  <Ico w={34} h={32}>
    <rect x="1" y="2" width="32" height="29" rx="2" fill="#dcebfc" stroke="#8ab4ea" />
    <rect x="23" y="2" width="10" height="29" fill="#6f9fe0" />
    <path d="M8 14h8v-5l8 7.500-8 7.500v-5H8z" fill="#6f9fe0" stroke="#4d7fc2" strokeWidth=".6" />
  </Ico>
);
const FindDocIcon = () => (
  <Ico w={38} h={42}>
    <path d="M3 1h19l6 8v27H3z" fill="#e5e9ed" />
    <path d="M22 1l6 8h-6z" fill="#fff" />
    <circle cx="21" cy="30" r="7.500" fill="#f1f3f5" stroke="#c9c9c9" strokeWidth="2" />
    <path d="M26 36l7 6" stroke="#c5bfb5" strokeWidth="3" />
  </Ico>
);

/* status bar icons */
const SearchIcon = () => (
  <Ico w={20} h={20}>
    <circle cx="8.500" cy="8.500" r="6.500" fill="none" stroke="#7a7a7a" strokeWidth="1.600" />
    <path d="M13 13l6 6" stroke="#7a7a7a" strokeWidth="2" />
  </Ico>
);
const MouseIcon = () => (
  <Ico w={26} h={28}>
    <g transform="rotate(-22 13 14)">
      <rect x="6" y="2" width="15" height="25" rx="7.500" fill="#222" />
      <rect x="11" y="5" width="5" height="8" rx="2.500" fill="#fff" />
      <circle cx="13.500" cy="20" r="3.500" fill="#fff" />
    </g>
    <path d="M22 3l2-2M2 17l2-1M24 8h2" stroke="#333" />
  </Ico>
);
const LockIcon = () => (
  <Ico w={18} h={26}>
    <path d="M4 12V7a5 5 0 0 1 10 0v5" fill="none" stroke="#a8a8a8" strokeWidth="2.400" />
    <rect x="1" y="11" width="16" height="14" rx="2" fill="#6a6a6a" />
  </Ico>
);
const GlobeIcon = () => (
  <Ico w={24} h={24}>
    <g fill="none" stroke="#6f6f6f" strokeWidth="1.200">
      <circle cx="12" cy="12" r="10.500" />
      <ellipse cx="12" cy="12" rx="5" ry="10.500" />
      <path d="M1.500 12h21M3 7h18M3 17h18M12 1.500v21" />
    </g>
  </Ico>
);
const ChatIcon = () => (
  <Ico w={24} h={24}>
    <path d="M12 2c6 0 11 3.500 11 8.500S18 19 12 19l-5 4v-5c-3-1.500-6-4-6-7.500C1 5.500 6 2 12 2z" fill="#666" />
    <circle cx="7" cy="10.500" r="1.700" fill="#fff" />
    <circle cx="12" cy="10.500" r="1.700" fill="#fff" />
    <circle cx="17" cy="10.500" r="1.700" fill="#fff" />
  </Ico>
);

/* ---------- annotations ---------- */
const Arrow = ({ x1, y1, x2, y2 }: { x1: number; y1: number; x2: number; y2: number }) => {
  const a = Math.atan2(y2 - y1, x2 - x1);
  const L = 24;
  const W = 8;
  const bx = x2 - L * Math.cos(a);
  const by = y2 - L * Math.sin(a);
  const nx = -Math.sin(a) * W;
  const ny = Math.cos(a) * W;
  return (
    <g>
      <line x1={x1} y1={y1} x2={bx} y2={by} stroke="#ee2128" strokeWidth="2" />
      <polygon points={`${x2},${y2} ${bx + nx},${by + ny} ${bx - nx},${by - ny}`} fill="#ee2128" />
    </g>
  );
};
const Callout = ({ x, y, n }: { x: number; y: number; n: number }) => (
  <g>
    <circle cx={x + 1.5} cy={y + 1.5} r="19.500" fill="#b0b0b0" />
    <circle cx={x} cy={y} r="19.500" fill="#d96448" />
    <CalloutNum x={x} y={y + 1}>
      {n}
    </CalloutNum>
  </g>
);

/* ---------- data ---------- */
const rows = [
  ["12", "GD", "00357/2022", "2022-03-21 .."],
  ["13", "GD", "00358/2022", "2022-03-21 .."],
  ["14", "GD", "00359/2022", "2022-03-21 .."],
  ["15", "GD", "00382/2022", "2022-04-26 .."],
  ["16", "GD", "00383/2022", "2022-04-26 .."],
  ["17", "GD", "00384/2022", "2022-04-26 .."],
  ["18", "GD", "00385/2022", "2022-04-26 .."],
];

const topTools: [React.ReactNode, number][] = [
  [<MapLayersIcon />, 40],
  [<WaveIcon />, 40],
  [<CloudIcon />, 41],
  [<Caret $size={6} />, 20],
  [<PolygonIcon />, 38],
  [<Caret $size={6} />, 22],
  [<RulerIcon />, 38],
  [<Caret $size={6} />, 20],
  [<TrayIcon />, 40],
  [<Caret $size={6} />, 18],
  [<PrinterIcon />, 42],
  [<HammerIcon />, 41],
  [<Caret $size={6} />, 16],
];

const sideTop = [<AddLayersIcon />, <WmsIcon />, <VertexIcon />, <FeatherIcon />, <ChipIcon />, <MeshIcon />, <VirtualIcon />];
const sideBottom: [React.ReactNode, boolean][] = [
  [<EditsIcon />, true],
  [<PencilIcon />, false],
  [<SaveEditsIcon />, true],
  [<DigitizeIcon />, true],
  [<ToolsIcon />, true],
  [<TableEditIcon />, true],
  [<TrashIcon />, true],
  [<CutIcon />, true],
  [<CopyIcon />, true],
  [<PasteIcon />, true],
  [<UndoIcon />, true],
];

const fields = [
  ["Provinsi", "Papua"],
  ["Kabupaten / Kota", "Puncak Jaya"],
  ["Kecamatan", "ACEH RI"],
  ["Desa/Kelurahan", "ACEH JAYA RI"],
];

const sideTabs: { t: string; h: number; active?: boolean; end?: boolean }[] = [
  { t: "Inv", h: 39, end: true },
  { t: "Pemetaan Persil", h: 147 },
  { t: "Surat Ukur", h: 111 },
  { t: "Gambar Denah", h: 141, active: true },
  { t: "Unduh Persil", h: 125 },
  { t: "Partisipatif", h: 109 },
];

export default function App() {
  return (
    <Page>
      <Global />
      <TopBar>
        <Dots $w={6} $h={16} />
        <ToolSlot $w={50}>
          <PowerIcon />
        </ToolSlot>
        <UserName>permenas</UserName>
        <ToolSep $ml={0} />
        <ToolSlot $w={5} />
        {topTools.map(([icon, w], i) => (
          <ToolSlot key={i} $w={w}>
            {icon}
          </ToolSlot>
        ))}
        <ToolSep $ml={7} />
        <ToolSlot $w={47}>
          <NoteIcon />
        </ToolSlot>
        <AppTitle>
          <EmblemIcon />
          Aplikasi GeoKKP-GIS ATR/BPN
        </AppTitle>
        <TopRight>
          <CompassIcon />
          <GearIcon />
          <HelpIcon />
        </TopRight>
      </TopBar>

      <Main>
        <SideBar>
          <Dots $w={16} $h={6} />
          <SideSlot $h={1} />
          {sideTop.map((ic, i) => (
            <SideSlot key={i}>{ic}</SideSlot>
          ))}
          <SideHandle>
            <Dots $w={16} $h={6} />
          </SideHandle>
          {sideBottom.map(([ic, fade], i) => (
            <SideSlot key={i} $fade={fade}>
              {ic}
            </SideSlot>
          ))}
          <SideSlot $h={28}>
            <Ico w={12} h={12}>
              <path d="M1 1l5 4 5-4M1 7l5 4 5-4" fill="none" stroke="#222" strokeWidth="1.500" />
            </Ico>
          </SideSlot>
        </SideBar>

        <Dock>
          <DockTitle>
            Layers
            <FloatButtons>
              <FloatIcon />
              <CloseIcon />
            </FloatButtons>
          </DockTitle>
          <DockTools>
            <DockTool $w={26}><BrushIcon /></DockTool>
            <DockTool $w={42}><ClipAddIcon /></DockTool>
            <DockTool $w={26}><EyeIcon /></DockTool>
            <DockTool $w={40}><FunnelIcon /></DockTool>
            <DockTool $w={26}><EpsilonIcon /></DockTool>
            <DockTool $w={22}><Caret $size={6} /></DockTool>
            <DockTool $w={32}><ExpandIcon /></DockTool>
            <DockTool $w={34}><ExpandIcon up /></DockTool>
            <DockTool $w={30}><RemoveLayerIcon /></DockTool>
          </DockTools>
          <Tree>
            <TreeRow $active>
              <Expander />
              <CheckBox><Tick /></CheckBox>
              <Swatch $c="#7f8b8f" />
              <LayerName $u $ml={6}>(020110) Apartemen</LayerName>
              <Indicator><ChipSmall /></Indicator>
            </TreeRow>
            <TreeRow>
              <Expander />
              <CheckBox><Tick /></CheckBox>
              <Swatch $c="#b6494c" />
              <LayerName $ml={8}>Puncakjaya</LayerName>
              <Indicator><FilterSmall /></Indicator>
            </TreeRow>
            <TreeRow>
              <Expander><Caret $size={5.5} /></Expander>
              <CheckBox $dim />
              <RasterSlot><RasterIcon /></RasterSlot>
              <LayerName $ghost $ml={8}>Peta Dasar Pendaftaran</LayerName>
            </TreeRow>
          </Tree>
          <DockTabs>
            <DockTab $active>Layers</DockTab>
            <DockTab>Browser</DockTab>
          </DockTabs>
        </Dock>

        <Splitter $w={9}>
          <Dots $w={3} $h={18} />
        </Splitter>

        <MapFrame>
          <MapSvg width="868" height="788" viewBox="486 69 868 788">
            <polygon points="725,69 1354,69 1354,857 704,857" fill="#b6494c" />
            <line x1="725" y1="69" x2="704" y2="857" stroke="#111" strokeWidth="1.200" />
            <polygon points="788,89 1074,109 1078,370 825,370" fill="#7f8b8f" stroke="#000" strokeWidth="1.500" />
            <polygon points="813,449 1020,473 941,838 764,813" fill="#7f8b8f" stroke="#000" strokeWidth="1.500" />
            <MapLabel x="939" y="232">00383/2022</MapLabel>
            <MapLabel x="885" y="639">00382/2022</MapLabel>
          </MapSvg>
        </MapFrame>

        <Splitter $w={10}>
          <Dots $w={3} $h={18} />
        </Splitter>

        <Panel>
          <PanelTitle>
            Panel Kerja GeoKKP-GIS
            <FloatButtons>
              <FloatIcon />
              <CloseIcon />
            </FloatButtons>
          </PanelTitle>
          <PanelBody>
            <TabColumn>
              {sideTabs.map((t) => (
                <SideTab key={t.t} $h={t.h} $active={t.active} $end={t.end}>
                  <SideTabText>{t.t}</SideTabText>
                </SideTab>
              ))}
              <TabStep><Caret $dir="up" $size={6} $color="#555" /></TabStep>
              <TabStep><Caret $size={6} $color="#aaa" /></TabStep>
            </TabColumn>
            <Pane>
              <ActionRow>
                <ActionBtn $off><ActionIcon><RunnerIcon /></ActionIcon>Mulai</ActionBtn>
                <ActionBtn><ActionIcon><FloppyIcon /></ActionIcon>Simpan</ActionBtn>
                <ActionBtn><ActionIcon><InfoIcon /></ActionIcon>Informasi</ActionBtn>
                <ActionBtn><ActionIcon><PrintBlueIcon /></ActionIcon>Layout</ActionBtn>
                <ActionBtn><ActionIcon><ExitIcon /></ActionIcon>Tutup</ActionBtn>
              </ActionRow>
              <FormGrid>
                {fields.map(([l, v]) => (
                  <React.Fragment key={l}>
                    <FieldLabel>{l}</FieldLabel>
                    <Combo>
                      {v}
                      <Caret $size={5.5} $color="#9a9a9a" />
                    </Combo>
                  </React.Fragment>
                ))}
                <FieldLabel>Nomor</FieldLabel>
                <EmptyField />
              </FormGrid>
              <YearRow>
                <YearLabel>Tahun</YearLabel>
                <YearField>2022</YearField>
                <FindBtn>
                  <FindDocIcon />
                  Cari Dokumen
                </FindBtn>
              </YearRow>
              <TableFrame>
                <TableView>
                  <HeadRow>
                    <HeadCell />
                    <HeadCell>Tipe</HeadCell>
                    <HeadCell>Nomor</HeadCell>
                    <HeadCell>Sejak</HeadCell>
                  </HeadRow>
                  <BodyClip>
                    <RowsScroll>
                      {rows.map((r) => {
                        const sel = r[0] === "15";
                        return (
                          <DataRow key={r[0]}>
                            <RowHead $sel={sel}>{r[0]}</RowHead>
                            <Cell $sel={sel}>{r[1]}</Cell>
                            <Cell $sel={sel}>{r[2]}</Cell>
                            <Cell $sel={sel}>{r[3]}</Cell>
                          </DataRow>
                        );
                      })}
                    </RowsScroll>
                  </BodyClip>
                </TableView>
                <VScroll>
                  <VStep $h={20}><Caret $dir="up" $size={5.5} $color="#555" /></VStep>
                  <VThumb />
                  <VTrack />
                  <VStep $h={21}><Caret $size={5.5} $color="#555" /></VStep>
                </VScroll>
                <HScroll>
                  <HStep><Caret $dir="left" $size={5.5} $color="#555" /></HStep>
                  <HTrack />
                  <HThumb />
                  <HStep><Caret $dir="right" $size={5.5} $color="#555" /></HStep>
                </HScroll>
                <Corner />
              </TableFrame>
              <Pager>
                <PageBtn>{"<<"}</PageBtn>
                <PageBtn $off>{"<"}</PageBtn>
                <PageBtn $off $flat>0 - 18 dari 18</PageBtn>
                <PageBtn $off>{">"}</PageBtn>
                <PageBtn>{">>"}</PageBtn>
              </Pager>
            </Pane>
          </PanelBody>
        </Panel>
      </Main>

      <StatusBar>
        <Locator>
          <SearchIcon />
          Type to locate (Ctrl+K)
        </Locator>
        <StatusMsg>5 legend entries removed.</StatusMsg>
        <StatusLabel $w={81} $right>Coordinate</StatusLabel>
        <StatusField $w={182}>277965,54 1110070,29</StatusField>
        <StatusSlot $w={36}><MouseIcon /></StatusSlot>
        <StatusLabel $w={45} $right>Scale</StatusLabel>
        <StatusField $w={112}>
          1:68
          <ComboDrop><Caret $size={5} /></ComboDrop>
        </StatusField>
        <StatusSlot $w={42}><LockIcon /></StatusSlot>
        <StatusLabel $w={68}>Magnifier</StatusLabel>
        <StatusField $w={108}>
          100%
          <SpinCol><Caret $dir="up" $size={5} /><Caret $size={5} /></SpinCol>
        </StatusField>
        <StatusLabel $w={78} $pad={10}>Rotation</StatusLabel>
        <StatusField $w={100}>
          0,0 °
          <SpinCol><Caret $dir="up" $size={5} /><Caret $size={5} /></SpinCol>
        </StatusField>
        <StatusCheck><Tick /></StatusCheck>
        <StatusLabel $w={72} $pad={7}>Render</StatusLabel>
        <StatusSlot $w={24}><GlobeIcon /></StatusSlot>
        <StatusLabel $w={120} $pad={3}>EPSG:23844</StatusLabel>
        <StatusSlot $w={24}><ChatIcon /></StatusSlot>
      </StatusBar>

      <Overlay width="1920" height="891" viewBox="0 0 1920 891">
        <Arrow x1={525} y1={340} x2={371} y2={152} />
        <Arrow x1={565} y1={472} x2={844} y2={337} />
        <Arrow x1={1490} y1={62} x2={1553} y2={136} />
        <Callout x={525} y={357} n={1} />
        <Callout x={552} y={484} n={2} />
        <Callout x={1481} y={48} n={3} />
      </Overlay>
    </Page>
  );
}
